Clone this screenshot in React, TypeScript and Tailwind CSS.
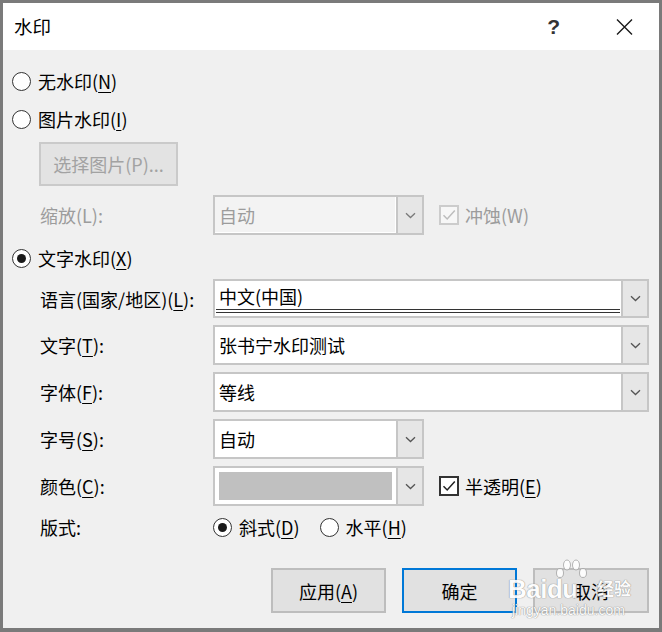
import React from "react";

const Radio = ({ checked }: { checked?: boolean }) => (
  <span className="w-[19px] h-[19px] shrink-0 rounded-full border-[1.5px] border-[#333] bg-white flex items-center justify-center">
    {checked && <span className="w-[9px] h-[9px] rounded-full bg-[#1a1a1a]" />}
  </span>
);

const Chevron = ({ color = "#555" }: { color?: string }) => (
  <svg width="11" height="7" viewBox="0 0 11 7">
    <path d="M1 1.2 L5.5 5.5 L10 1.2" fill="none" stroke={color} strokeWidth="1.3" />
  </svg>
);

const Check = ({ color }: { color: string }) => (
  <svg width="16" height="16" viewBox="0 0 16 16">
    <path d="M2.5 8.2 L6.2 12 L13.8 3.5" fill="none" stroke={color} strokeWidth="1.5" />
  </svg>
);

const U = ({ children }: { children: React.ReactNode }) => (
  <span className="underline underline-offset-[3px] decoration-1">{children}</span>
);

const DropBtn = ({ disabled }: { disabled?: boolean }) => (
  <div className="w-[26px] shrink-0 bg-[#e6e6e6] border-l-2 border-[#c6c6c6] flex items-center justify-center">
    <Chevron color={disabled ? "#7a7a7a" : "#555"} />
  </div>
);

export default function App() {
  return (
    <div className="relative w-[662px] h-[632px] border-[3px] border-b-4 border-[#7a7a7a] bg-[#f0f0f0] flex flex-col font-['Noto_Sans_CJK_SC',sans-serif] text-[18px] text-black leading-none">
      {/* Title bar */}
      <div className="h-[47px] bg-white flex items-center justify-between pl-[11px] shrink-0">
        <span className="text-[18.5px]">水印</span>
        <div className="flex items-center gap-[56px] pr-[26px]">
          <span className="font-['Liberation_Sans',sans-serif] text-[21px] font-bold text-[#333]">?</span>
          <svg width="17" height="16" viewBox="0 0 17 16">
            <path d="M1 0.5 L16 15.5 M16 0.5 L1 15.5" stroke="#1a1a1a" strokeWidth="1.4" />
          </svg>
        </div>
      </div>

      {/* Body */}
      <div className="flex flex-col pt-[12px] pr-[10px]">
        <div className="flex items-center h-[38px] pl-[9px] gap-[7px]">
          <Radio />
          <span>
            无水印(<U>N</U>)
          </span>
        </div>
        <div className="flex items-center h-[38px] pl-[9px] gap-[7px]">
          <Radio />
          <span>
            图片水印(<U>I</U>)
          </span>
        </div>
        <div className="ml-[36px] mt-[4px] w-[139px] h-[44px] bg-[#e3e3e3] border-2 border-[#cacaca] flex items-center justify-center text-[#a2a2a2]">
          选择图片(P)...
        </div>
        <div className="flex items-center mt-[9px] h-[40px] pl-[37px]">
          <span className="w-[173px] shrink-0 text-[#9c9c9c]">缩放(L):</span>
          <div className="flex w-[211px] h-[40px] border-2 border-[#c6c6c6]">
            <div className="flex-1 bg-[#f3f3f3] border-r border-b border-white flex items-center pl-[4px] text-[#9c9c9c]">
              自动
            </div>
            <DropBtn disabled />
          </div>
          <div className="ml-[15px] w-[20px] h-[20px] border-2 border-[#cccccc] bg-[#f7f7f7] flex items-center justify-center">
            <Check color="#bdbdbd" />
          </div>
          <span className="ml-[6px] text-[#9c9c9c]">冲蚀(W)</span>
        </div>

        <div className="flex items-center h-[38px] mt-[4px] pl-[9px] gap-[7px]">
          <Radio checked />
          <span>
            文字水印(<U>X</U>)
          </span>
        </div>

        <div className="flex items-center mt-[2px] h-[39px] pl-[37px]">
          <span className="w-[173px] shrink-0">
            语言(国家/地区)(<U>L</U>):
          </span>
          <div className="flex flex-1 h-[39px] border-2 border-[#c6c6c6]">
            <div className="flex-1 bg-white flex flex-col">
              <div className="flex-1 flex items-center pl-[4px] pt-[1px]">中文(中国)</div>
              <div className="h-[4px] mx-[1px] mb-[3px] border-y border-[#333]" />
            </div>
            <DropBtn />
          </div>
        </div>

        <div className="flex items-center mt-[7px] h-[40px] pl-[37px]">
          <span className="w-[173px] shrink-0">
            文字(<U>T</U>):
          </span>
          <div className="flex flex-1 h-[40px] border-2 border-[#c6c6c6]">
            <div className="flex-1 bg-white flex items-center pl-[4px]">张书宁水印测试</div>
            <DropBtn />
          </div>
        </div>

        <div className="flex items-center mt-[7px] h-[40px] pl-[37px]">
          <span className="w-[173px] shrink-0">
            字体(<U>F</U>):
          </span>
          <div className="flex flex-1 h-[40px] border-2 border-[#c6c6c6]">
            <div className="flex-1 bg-white flex items-center pl-[4px]">等线</div>
            <DropBtn />
          </div>
        </div>

        <div className="flex items-center mt-[7px] h-[40px] pl-[37px]">
          <span className="w-[173px] shrink-0">
            字号(<U>S</U>):
          </span>
          <div className="flex w-[211px] h-[40px] border-2 border-[#c6c6c6]">
            <div className="flex-1 bg-white flex items-center pl-[4px]">自动</div>
            <DropBtn />
          </div>
        </div>

        <div className="flex items-center mt-[7px] h-[40px] pl-[37px]">
          <span className="w-[173px] shrink-0">
            颜色(<U>C</U>):
          </span>
          <div className="flex w-[211px] h-[40px] border-2 border-[#c6c6c6]">
            <div className="flex-1 bg-white p-[4px]">
              <div className="w-full h-full bg-[#c0c0c0]" />
            </div>
            <DropBtn />
          </div>
          <div className="ml-[15px] w-[20px] h-[20px] border-2 border-[#333] bg-white flex items-center justify-center">
            <Check color="#222" />
          </div>
          <span className="ml-[6px]">
            半透明(<U>E</U>)
          </span>
        </div>

        <div className="flex items-center mt-[2px] h-[38px] pl-[37px]">
          <span className="w-[173px] shrink-0">版式:</span>
          <Radio checked />
          <span className="ml-[7px]">
            斜式(<U>D</U>)
          </span>
          <span className="ml-[20px]">
            <Radio />
          </span>
          <span className="ml-[7px]">
            水平(<U>H</U>)
          </span>
        </div>

        <div className="flex justify-end gap-[16px] mt-[22px]">
          <div className="w-[115px] h-[45px] bg-[#e1e1e1] border-2 border-[#bdbdbd] flex items-center justify-center">
            应用(<U>A</U>)
          </div>
          <div className="w-[115px] h-[45px] bg-[#e1e1e1] border-2 border-[#0078d7] flex items-center justify-center">
            确定
          </div>
          <div className="w-[116px] h-[45px] bg-[#e1e1e1] border-2 border-[#bdbdbd] flex items-center justify-center">
            取消
          </div>
        </div>
      </div>

      {/* Baidu jingyan watermark overlay */}
      <div className="absolute left-[502px] top-[552px] w-[126px] h-[64px] pointer-events-none text-white opacity-90 [text-shadow:0_0_1px_#8a8a8a,0_0_1px_#8a8a8a]">
        <svg className="absolute left-[50px] top-[4px]" width="34" height="22" viewBox="0 0 34 22">
          <g fill="#fff" stroke="#9a9a9a" strokeWidth="0.8">
            <ellipse cx="5" cy="14" rx="3.5" ry="4.5" />
            <ellipse cx="12" cy="6" rx="3.5" ry="5" />
            <ellipse cx="21" cy="6" rx="3.5" ry="5" />
            <ellipse cx="28" cy="14" rx="3.5" ry="4.5" />
          </g>
        </svg>
        <span className="absolute left-[3px] top-[21px] font-['Liberation_Sans',sans-serif] font-bold text-[26px] tracking-[-0.5px]">Baidu</span>
        <span className="absolute left-[92px] top-[24px] text-[17px] font-bold">经验</span>
        <span className="absolute left-[7px] top-[48px] font-['Liberation_Sans',sans-serif] text-[14px]">jingyan.baidu.com</span>
      </div>
    </div>
  );
}
